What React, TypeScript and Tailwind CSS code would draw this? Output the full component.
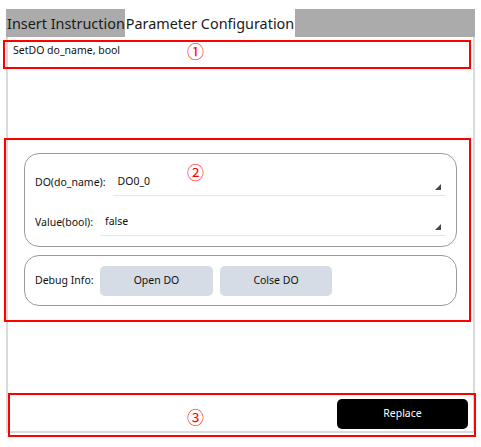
import { useState } from 'react';

const FONT = { fontFamily: '"Noto Sans", "Open Sans", sans-serif' };
const CIRCLE = { fontFamily: '"Noto Sans CJK SC", "DejaVu Sans", sans-serif' };

function SelectField({ label, value }: { label: string; value: string }) {
  return (
    <div className="flex items-end gap-[7px] h-[28px]">
      <span className="text-[10.5px] leading-[14px] text-[#111] pb-[7px] whitespace-nowrap">{label}</span>
      <div className="relative flex-1 h-full border-b border-[#e6e6e6] flex items-end pb-[7px] pl-[5px]">
        <span className="text-[10.5px] leading-[14px] text-[#111]">{value}</span>
        <svg className="absolute right-[5px] bottom-[5px]" width="6" height="6" viewBox="0 0 6 6">
          <polygon points="6,0 6,6 0,6" fill="#4a4a4a" />
        </svg>
      </div>
    </div>
  );
}

export default function App() {
  const [tab] = useState(1);

  return (
    <div className="relative w-[481px] h-[447px] bg-white" style={FONT}>
      <div className="pt-[9px] px-[6px]">
        {/* tabs */}
        <div className="flex h-[28px] bg-[#ababab] w-[469px]">
          <div className={tab === 0 ? 'bg-white' : ''}>
            <span className="block text-[14.4px] leading-[28px] pt-[1px] text-[#1a1a1a] pl-[1px] whitespace-nowrap">Insert Instruction</span>
          </div>
          <div className="bg-white pr-[1px]">
            <span className="block text-[14.4px] leading-[28px] pt-[1px] text-[#1a1a1a] pl-[1px] whitespace-nowrap">Parameter Configuration</span>
          </div>
        </div>

        {/* panel */}
        <div className="h-[396px] w-[469px] border-x-2 border-b-2 border-[#dadada] flex flex-col">
          <div className="pt-[6px] pl-[5px] text-[10.5px] leading-[14px] text-[#111]">SetDO do_name, bool</div>

          <div className="mt-[96px] px-[16px] flex flex-col gap-[8px]">
            <div className="h-[94px] border border-[#9a9a9a] rounded-[15px] pt-[14px] pb-[10px] px-[10px] flex flex-col gap-[12px]">
              <SelectField label="DO(do_name):" value="DO0_0" />
              <SelectField label="Value(bool):" value="false" />
            </div>
            <div className="h-[51px] border border-[#9a9a9a] rounded-[15px] pl-[10px] flex items-center gap-[7px]">
              <span className="w-[58px] text-[10.5px] text-[#111] whitespace-nowrap">Debug Info:</span>
              <button className="w-[113px] h-[30px] rounded-[5px] bg-[#d5dce6] text-[10.5px] text-[#111]">Open DO</button>
              <button className="w-[112px] h-[30px] rounded-[5px] bg-[#d5dce6] text-[10.5px] text-[#111]">Colse DO</button>
            </div>
          </div>

          <div className="mt-auto flex justify-end pr-[5px] pb-[2px]">
            <button className="w-[131px] h-[30px] rounded-[5px] bg-black text-white text-[10.5px]">Replace</button>
          </div>
        </div>
      </div>

      {/* annotation overlays */}
      <div className="absolute left-[3px] top-[40px] w-[468px] h-[29px] border-2 border-[#ff0000] pointer-events-none">
        <span className="absolute left-[182px] top-[-1px] text-[17px] leading-[20px] text-[#ff0000]" style={CIRCLE}>①</span>
      </div>
      <div className="absolute left-[4px] top-[138px] w-[467px] h-[184px] border-2 border-[#ff0000] pointer-events-none">
        <span className="absolute left-[181px] top-[22px] text-[17px] leading-[20px] text-[#ff0000]" style={CIRCLE}>②</span>
      </div>
      <div className="absolute left-[8px] top-[393px] w-[468px] h-[44px] border-2 border-[#ff0000] pointer-events-none">
        <span className="absolute left-[177px] top-[12px] text-[17px] leading-[20px] text-[#ff0000]" style={CIRCLE}>③</span>
      </div>
    </div>
  );
}
